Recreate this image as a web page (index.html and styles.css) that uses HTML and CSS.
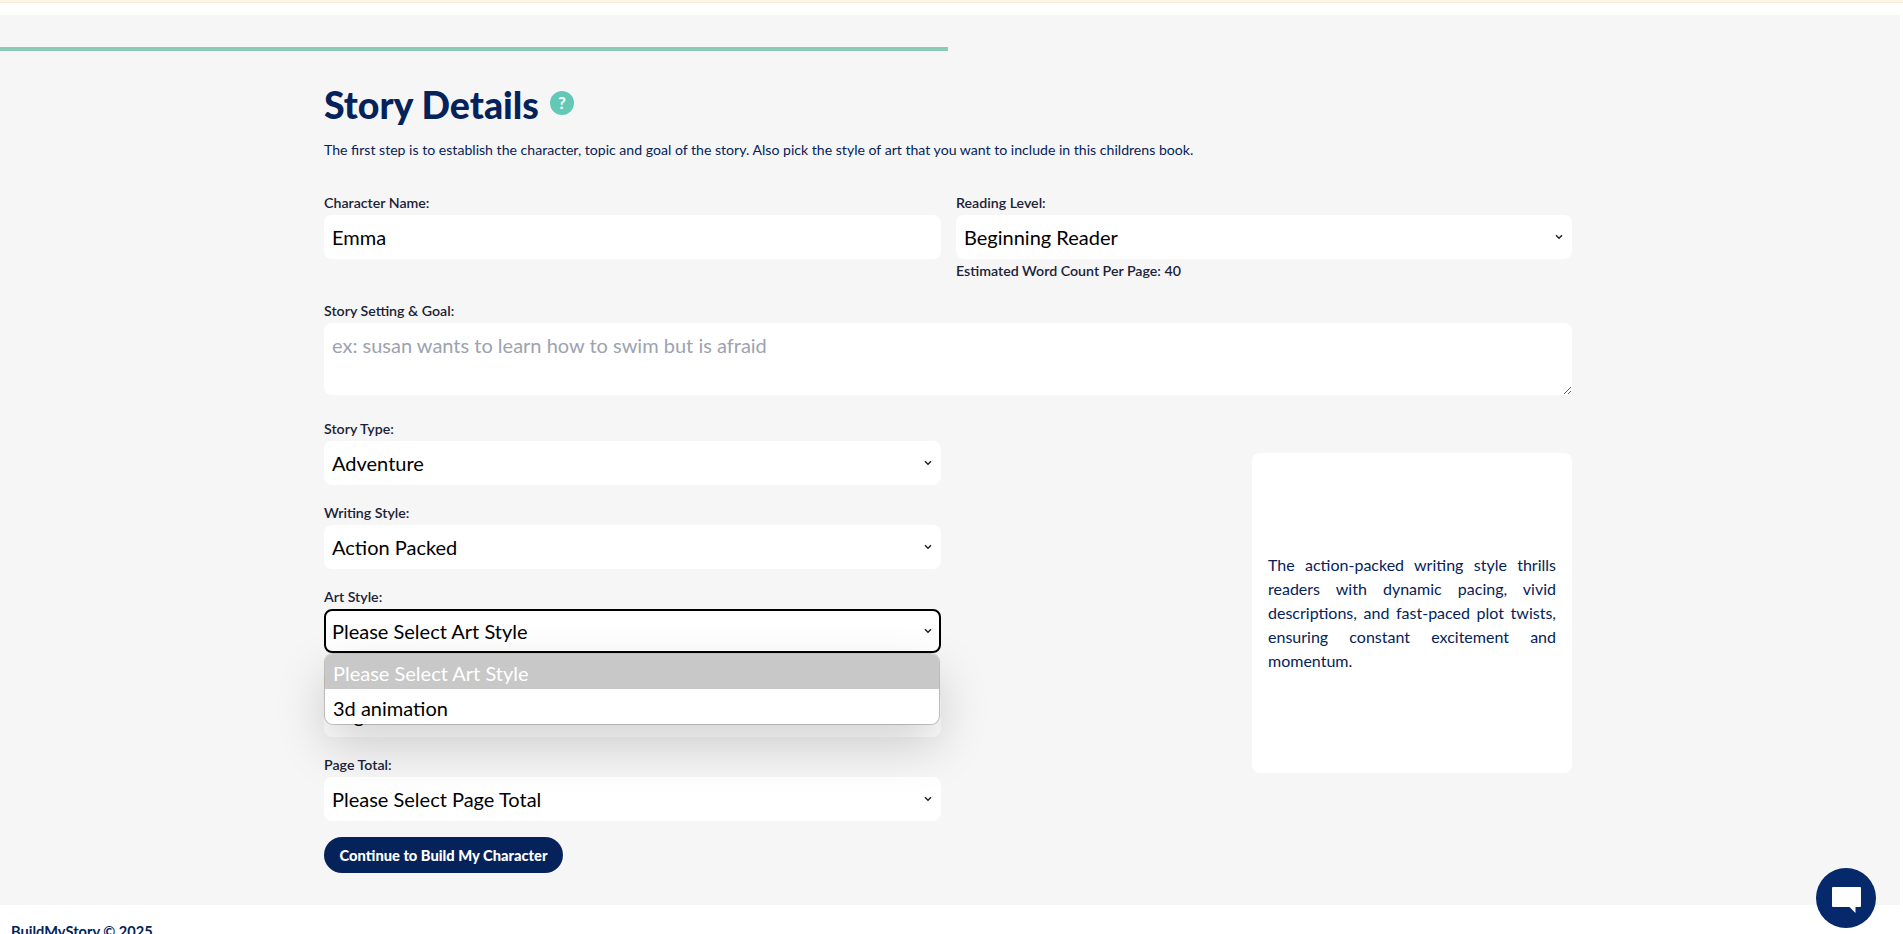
FILE: index.html
```html
<!DOCTYPE html>
<html>
<head>
  <title>BuildMyStory - Story Details</title>
  <link rel="stylesheet" href="styles.css">
</head>
<body>
  <div class="top-strip"></div>

  <main class="page-main">
    <div class="progress-bar"></div>

    <div class="content">
      <div class="title-row">
        <h1>Story Details</h1>
        <span class="help-icon">?</span>
      </div>
      <p class="intro">The first step is to establish the character, topic and goal of the story. Also pick the style of art that you want to include in this childrens book.</p>

      <div class="top-fields">
        <div class="form-group">
          <label for="character">Character Name:</label>
          <input type="text" id="character" value="Emma">
        </div>
        <div class="form-group">
          <label for="level">Reading Level:</label>
          <select id="level">
            <option>Beginning Reader</option>
          </select>
          <div class="hint">Estimated Word Count Per Page: 40</div>
        </div>
      </div>

      <div class="form-group goal-group">
        <label for="goal">Story Setting &amp; Goal:</label>
        <textarea id="goal" placeholder="ex: susan wants to learn how to swim but is afraid"></textarea>
      </div>

      <div class="lower-section">
        <div class="select-column">
          <div class="form-group">
            <label for="type">Story Type:</label>
            <select id="type">
              <option>Adventure</option>
            </select>
          </div>
          <div class="form-group">
            <label for="writing">Writing Style:</label>
            <select id="writing">
              <option>Action Packed</option>
            </select>
          </div>
          <div class="form-group art-group">
            <label for="art">Art Style:</label>
            <select id="art" class="select-open">
              <option>Please Select Art Style</option>
            </select>
            <div class="select-menu">
              <div class="select-option selected">Please Select Art Style</div>
              <div class="select-option">3d animation</div>
            </div>
          </div>
          <div class="form-group">
            <label for="size">Page Size:</label>
            <select id="size">
              <option>Page Size</option>
            </select>
          </div>
          <div class="form-group">
            <label for="pages">Page Total:</label>
            <select id="pages">
              <option>Please Select Page Total</option>
            </select>
          </div>
          <button class="continue-btn">Continue to Build My Character</button>
        </div>

        <aside class="style-info">
          <p>The action-packed writing style thrills readers with dynamic pacing, vivid descriptions, and fast-paced plot twists, ensuring constant excitement and momentum.</p>
        </aside>
      </div>
    </div>
  </main>

  <footer class="page-footer">BuildMyStory © 2025</footer>

  <button class="chat-btn" aria-label="Chat">
    <svg xmlns="http://www.w3.org/2000/svg" width="29" height="26" viewBox="0 0 29 26">
      <path fill="#ffffff" d="M1 0h27a1 1 0 0 1 1 1v18a1 1 0 0 1-1 1h-4.5v6l-6-6H1a1 1 0 0 1-1-1V1a1 1 0 0 1 1-1Z"/>
    </svg>
  </button>
</body>
</html>
```

FILE: styles.css
```css
html, body {
  height: 934px;
  overflow: hidden;
}

body {
  font-family: 'Lato', 'Open Sans', sans-serif;
  margin: 0;
  background-color: #ffffff;
  color: #05235a;
}

.top-strip {
  height: 15px;
  box-sizing: border-box;
  background: linear-gradient(to bottom, #fdf6ea 2px, #f7ead2 2px, #f7ead2 3px, #ffffff 3px);
}

.page-main {
  width: 1900px;
  height: 890px;
  box-sizing: border-box;
  padding-top: 32px;
  background-color: #f6f6f6;
}

.progress-bar {
  width: 948px;
  height: 4px;
  background-color: #8ccbb8;
}

.content {
  width: 1248px;
  margin-left: 324px;
}

.title-row {
  display: flex;
  align-items: center;
  gap: 11px;
  margin-top: 32px;
  height: 44px;
}

h1 {
  font-size: 37.5px;
  font-weight: 900;
  line-height: 44px;
  margin: 0;
  color: #05235a;
}

.help-icon {
  width: 24px;
  height: 24px;
  border-radius: 50%;
  background-color: #63c9b6;
  color: #ffffff;
  font-size: 17px;
  font-weight: 700;
  line-height: 24px;
  text-align: center;
  margin-top: -4px;
}

.intro {
  font-size: 14.1px;
  line-height: 20px;
  margin: 13px 0 0;
}

.top-fields {
  display: grid;
  grid-template-columns: 617px 616px;
  gap: 15px;
  margin-top: 35px;
}

.form-group label {
  display: block;
  font-size: 14.2px;
  font-weight: 600;
  line-height: 16px;
  margin-bottom: 4px;
  color: #1b2238;
}

input[type="text"],
select,
textarea {
  display: block;
  width: 100%;
  height: 44px;
  box-sizing: border-box;
  padding: 0 8px;
  background-color: #ffffff;
  border: none;
  border-radius: 8px;
  font-family: inherit;
  font-size: 20px;
  color: #000000;
}

select {
  appearance: none;
  background-image: url("data:image/svg+xml,%3Csvg xmlns='http://www.w3.org/2000/svg' width='8' height='6' viewBox='0 0 8 6'%3E%3Cpath d='M1 1.2l3 3 3-3' fill='none' stroke='%23222' stroke-width='1.5'/%3E%3C/svg%3E");
  background-repeat: no-repeat;
  background-position: right 9px center;
}

textarea {
  height: 72px;
  padding: 10px 8px;
}

textarea::placeholder {
  color: #9ca3af;
}

.hint {
  font-size: 14.2px;
  font-weight: 600;
  line-height: 16px;
  margin-top: 4px;
  color: #1b2238;
}

.goal-group {
  margin-top: 24px;
}

.lower-section {
  display: flex;
  justify-content: space-between;
  margin-top: 26px;
}

.select-column {
  display: flex;
  flex-direction: column;
  align-items: flex-start;
  gap: 20px;
  width: 617px;
}

.select-column .form-group {
  width: 100%;
}

.art-group {
  position: relative;
}

.select-open {
  outline: 2px solid #000000;
  outline-offset: -2px;
}

.select-menu {
  position: absolute;
  z-index: 5;
  top: 65px;
  left: 1px;
  right: 2px;
  height: 70px;
  background-color: #ffffff;
  border-radius: 8px;
  overflow: hidden;
  box-shadow: 0 0 0 1px rgba(0, 0, 0, 0.2), 0 20px 50px rgba(0, 0, 0, 0.18);
}

.select-option {
  height: 35px;
  padding-left: 8px;
  font-size: 20px;
  line-height: 39px;
  color: #000000;
}

.select-option.selected {
  background-color: #c8c8c8;
  color: #ffffff;
}

.continue-btn {
  margin-top: -4px;
  width: 239px;
  height: 36px;
  background-color: #05235a;
  color: #ffffff;
  border: none;
  border-radius: 18px;
  font-family: inherit;
  font-size: 14.7px;
  font-weight: 900;
}

.style-info {
  display: flex;
  align-items: center;
  width: 320px;
  height: 320px;
  box-sizing: border-box;
  padding: 0 16px;
  margin-top: 32px;
  background-color: #ffffff;
  border-radius: 8px;
  font-size: 16px;
  line-height: 24px;
}

.style-info p {
  margin: 0;
  text-align: justify;
}

.page-footer {
  margin-top: 18px;
  padding-left: 11px;
  font-size: 14.6px;
  font-weight: 700;
  line-height: 18px;
}

.chat-btn {
  position: fixed;
  right: 27px;
  bottom: 6px;
  display: flex;
  align-items: center;
  justify-content: center;
  width: 60px;
  height: 60px;
  padding: 4px 0 0;
  border: none;
  border-radius: 50%;
  background-color: #05296b;
}
```
